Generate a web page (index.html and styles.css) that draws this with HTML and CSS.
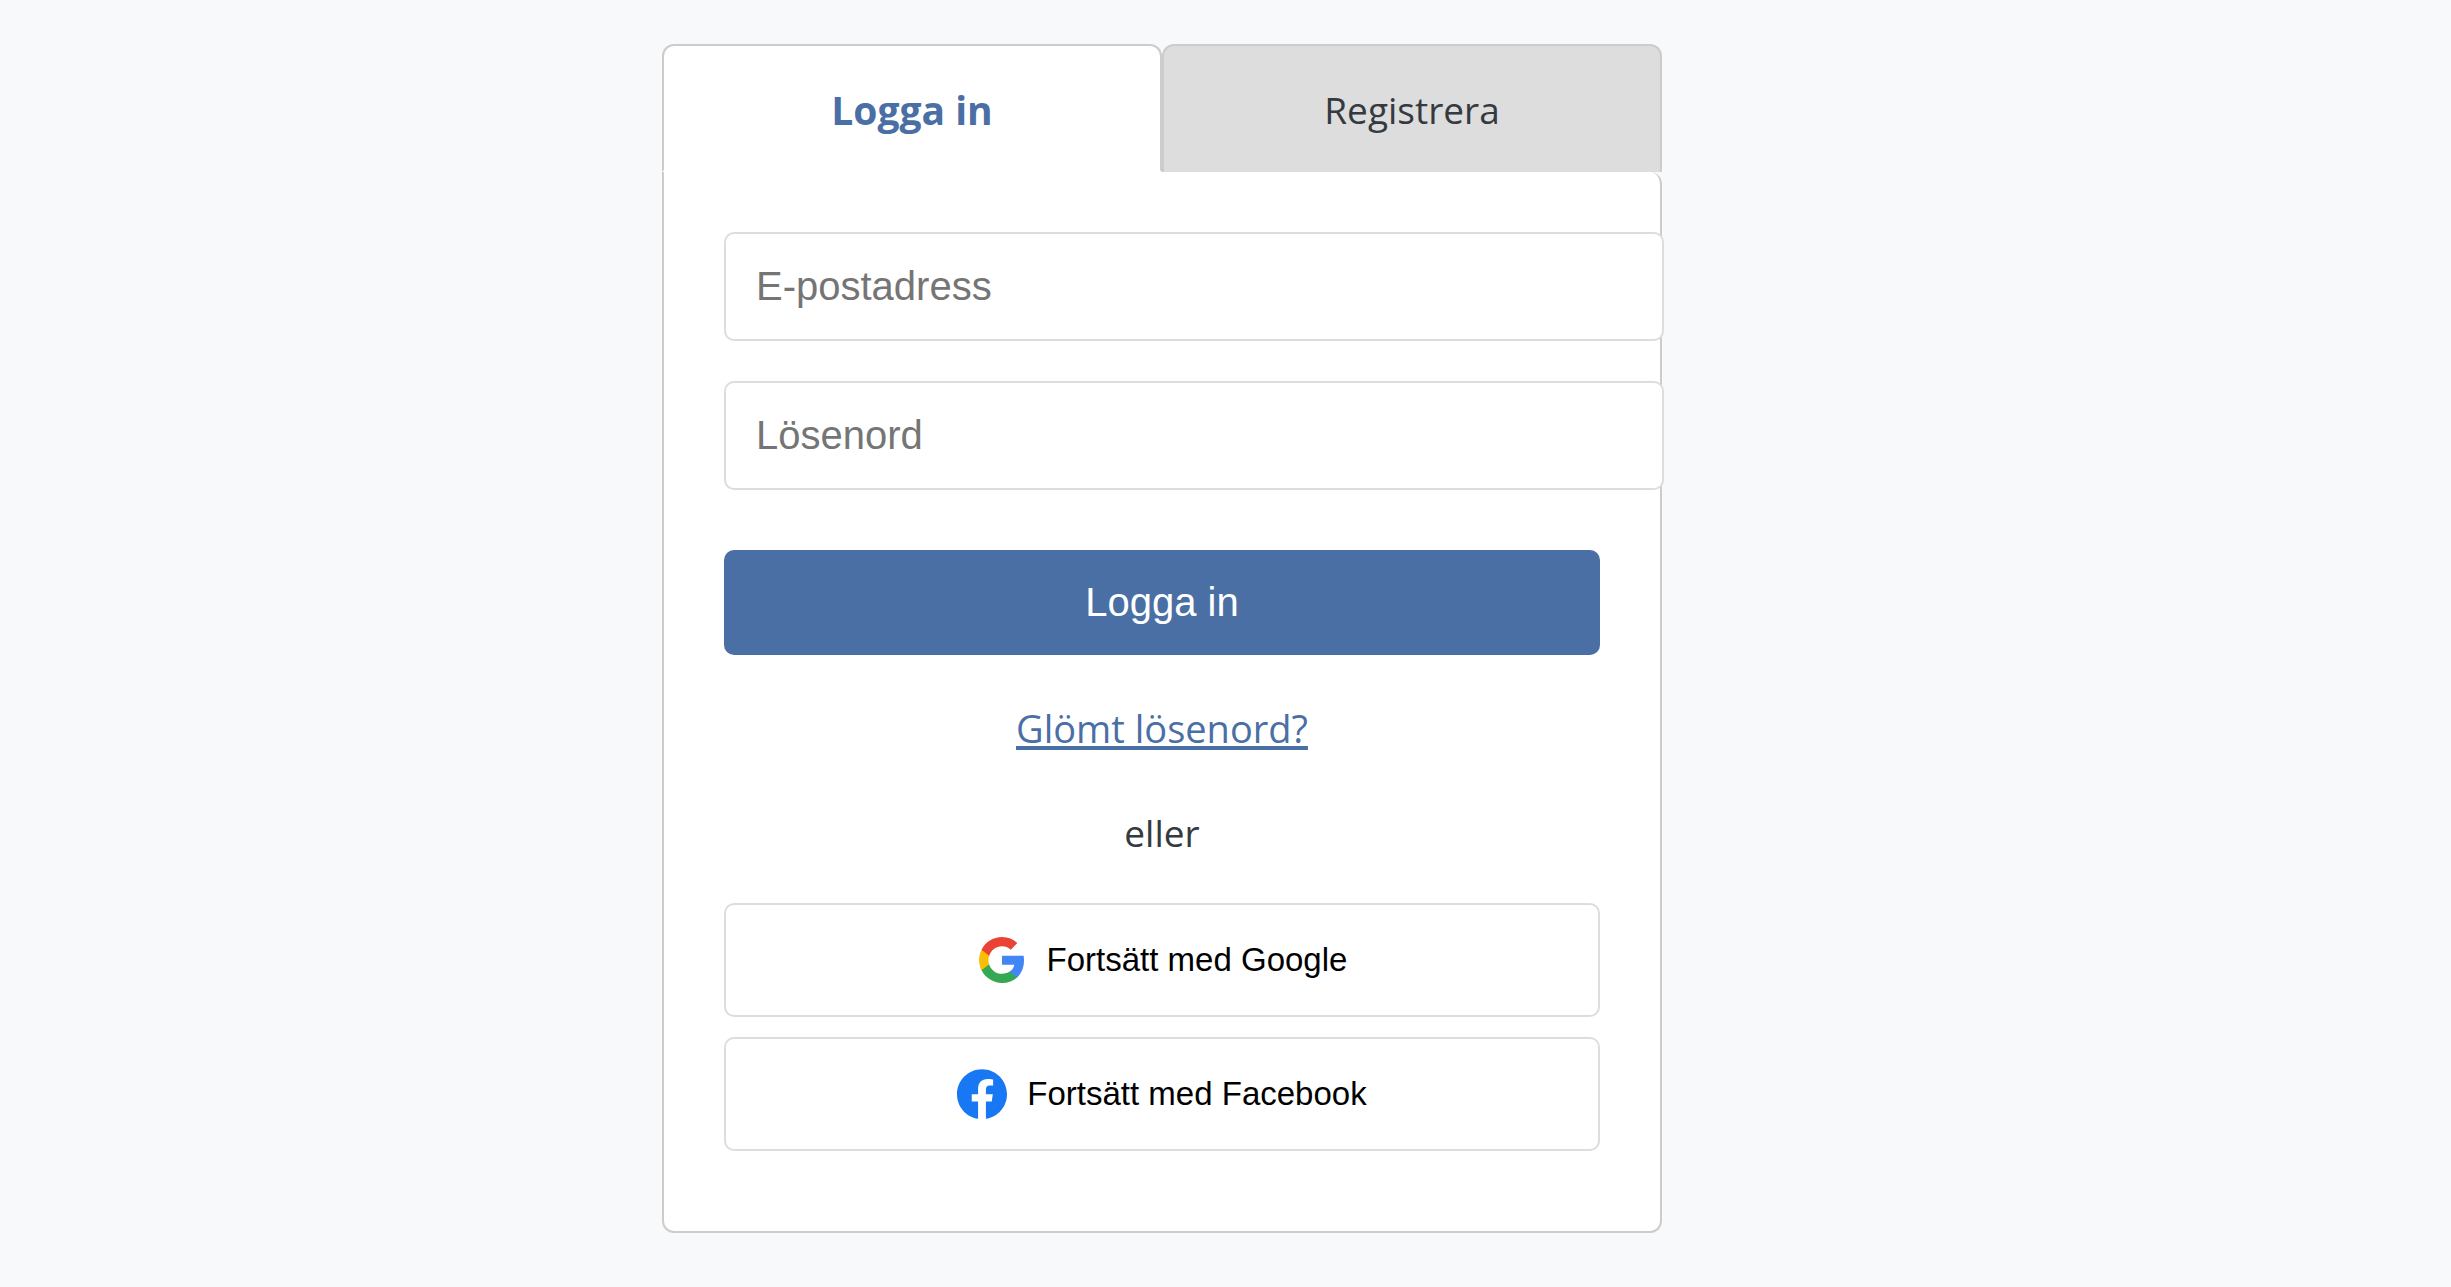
FILE: index.html
```
<!DOCTYPE html>
<html lang="sv">
<head>
  <meta charset="utf-8">
  <meta name="viewport" content="width=device-width, initial-scale=1">
  <title>Logga in</title>
  <link rel="stylesheet" href="styles.css">
</head>
<body>
  <main class="page">
    <section class="auth">
      <div class="tabs" role="tablist">
        <button class="tab tab-active" type="button" role="tab" id="tab-login" aria-selected="true" aria-controls="login-panel">Logga in</button>
        <button class="tab" type="button" role="tab" aria-selected="false">Registrera</button>
      </div>
      <div class="panel" id="login-panel" role="tabpanel" aria-labelledby="tab-login">
        <form class="form">
          <input class="field" type="email" aria-label="E-postadress" placeholder="E-postadress">
          <input class="field" type="password" aria-label="Lösenord" placeholder="Lösenord">
          <button class="submit" type="submit">Logga in</button>
        </form>
        <p class="note"><a class="link" href="#">Glömt lösenord?</a></p>
        <p class="note">eller</p>
        <div class="providers">
          <button class="provider" type="button">
            <svg class="provider-icon" viewBox="0 0 24 24" aria-hidden="true">
              <path fill="#4285f4" d="M22.56 12.25c0-.78-.07-1.53-.2-2.25H12v4.26h5.92c-.26 1.37-1.04 2.53-2.21 3.31v2.77h3.57c2.08-1.92 3.28-4.74 3.28-8.09z"/>
              <path fill="#34a853" d="M12 23c2.97 0 5.46-.98 7.28-2.66l-3.57-2.77c-.98.66-2.23 1.06-3.71 1.06-2.86 0-5.29-1.93-6.16-4.53H2.18v2.84C3.99 20.53 7.7 23 12 23z"/>
              <path fill="#fbbc05" d="M5.84 14.09c-.22-.66-.35-1.36-.35-2.09s.13-1.43.35-2.09V7.07H2.18C1.43 8.55 1 10.22 1 12s.43 3.45 1.18 4.93l3.66-2.84z"/>
              <path fill="#ea4335" d="M12 5.38c1.62 0 3.06.56 4.21 1.64l3.15-3.15C17.45 2.09 14.97 1 12 1 7.7 1 3.99 3.47 2.18 7.07l3.66 2.84c.87-2.6 3.3-4.53 6.16-4.53z"/>
            </svg>
            Fortsätt med Google
          </button>
          <button class="provider" type="button">
            <svg class="provider-icon" viewBox="0 0 24 24" aria-hidden="true">
              <path fill="#1877f2" d="M24 12.073c0-6.627-5.373-12-12-12s-12 5.373-12 12c0 5.99 4.388 10.954 10.125 11.854v-8.385H7.078v-3.47h3.047V9.43c0-3.007 1.792-4.669 4.533-4.669 1.312 0 2.686.235 2.686.235v2.953H15.83c-1.491 0-1.956.925-1.956 1.874v2.25h3.328l-.532 3.47h-2.796v8.385C19.612 23.027 24 18.062 24 12.073z"/>
            </svg>
            Fortsätt med Facebook
          </button>
        </div>
      </div>
    </section>
  </main>
</body>
</html>
```
FILE: styles.css
```
body {
  margin: 0;
  background: #f8f9fb;
  color: #343a40;
  font-family: "Segoe UI", "Open Sans", sans-serif;
  font-size: 37px;
  line-height: 64px;
}

.page {
  display: flex;
  justify-content: center;
  padding: 44px 127px 54px 0;
}

.auth {
  width: 100%;
  max-width: 1000px;
}

.tabs {
  display: grid;
  grid-template-columns: 1fr 1fr;
}

.tab {
  padding: 32px 30px 30px;
  border: 2px solid #ccc;
  border-bottom: none;
  border-radius: 12px 12px 0 0;
  background: #ddd;
  color: inherit;
  font: inherit;
  cursor: pointer;
}

.tab-active {
  padding-bottom: 28px;
  border-bottom: 2px solid #fff;
  background: #fff;
  color: #4a6fa5;
  font-size: 39px;
  font-weight: 700;
}

.panel {
  padding: 60px;
  border: 2px solid #ccc;
  border-top: none;
  border-radius: 0 12px 12px 12px;
  background: #fff;
}

.form {
  margin-bottom: 41px;
}

.field {
  display: block;
  width: 100%;
  margin-bottom: 40px;
  padding: 30px;
  border: 2px solid #ddd;
  border-radius: 10px;
  background: #fff;
  font: 40px/45px Arial, "Liberation Sans", sans-serif;
}

.field::placeholder {
  color: #757575;
}

.submit {
  width: 100%;
  margin-top: 20px;
  padding: 30px;
  border: none;
  border-radius: 10px;
  background: #4a6fa5;
  color: #fff;
  font: 40px/45px Arial, "Liberation Sans", sans-serif;
  cursor: pointer;
}

.note {
  margin: 0;
  text-align: center;
}

.note + .note {
  margin: 40px 0 38px;
}

.link {
  color: #4a6fa5;
  font-size: 38px;
  text-decoration-thickness: 4px;
  text-underline-offset: 3px;
  text-decoration-skip-ink: none;
}

.providers {
  display: grid;
  gap: 20px;
  padding-bottom: 20px;
}

.provider {
  display: flex;
  align-items: center;
  justify-content: center;
  gap: 20px;
  padding: 30px;
  border: 2px solid #ddd;
  border-radius: 10px;
  background: #fff;
  color: #000;
  font: 33px/40px Arial, "Liberation Sans", sans-serif;
  cursor: pointer;
}

.provider-icon {
  width: 50px;
  height: 50px;
}
```
